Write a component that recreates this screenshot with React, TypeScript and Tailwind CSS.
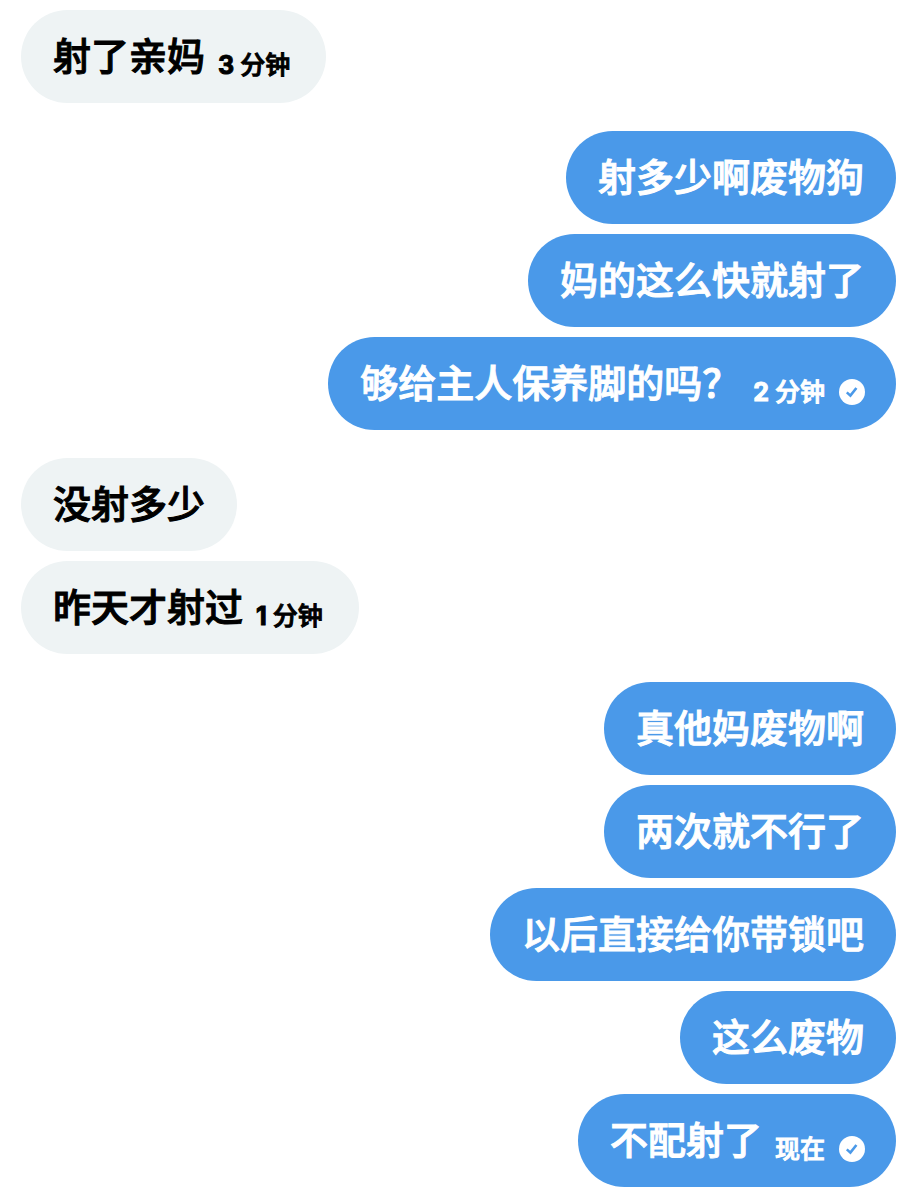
import React from 'react';
import clsx from 'clsx';

type Message = {
  text: string;
  count?: string;
  time?: string;
};

type MessageGroup = {
  from: 'me' | 'them';
  messages: Message[];
};

const conversation: MessageGroup[] = [
  {
    from: 'them',
    messages: [{ text: '射了亲妈', count: '3', time: '分钟' }],
  },
  {
    from: 'me',
    messages: [
      { text: '射多少啊废物狗' },
      { text: '妈的这么快就射了' },
      { text: '够给主人保养脚的吗？', count: '2', time: '分钟' },
    ],
  },
  {
    from: 'them',
    messages: [{ text: '没射多少' }, { text: '昨天才射过', count: '1', time: '分钟' }],
  },
  {
    from: 'me',
    messages: [
      { text: '真他妈废物啊' },
      { text: '两次就不行了' },
      { text: '以后直接给你带锁吧' },
      { text: '这么废物' },
      { text: '不配射了', time: '现在' },
    ],
  },
];

function SentIcon() {
  return (
    <svg viewBox="0 0 26 26" className="ml-[14px] size-[26px] shrink-0" role="img" aria-label="已发送">
      <circle cx="13" cy="13" r="13" fill="white" />
      <path d="M7.8 13.4l3.6 3.2 6-7.6" fill="none" stroke="#4a99e9" strokeWidth="2.6" />
    </svg>
  );
}

function Bubble({ message, mine }: { message: Message; mine: boolean }) {
  return (
    <li
      className={clsx(
        'flex min-h-[93px] items-center rounded-[47px] pl-8 [-webkit-text-stroke:1px]',
        mine ? 'bg-[#4a99e9] text-white' : 'bg-[#eef3f4] text-black',
        !message.time && 'pr-8',
        message.time && (mine ? 'pr-[31px]' : 'pr-9')
      )}
    >
      <p className="pb-[2px] text-[38px] leading-[56px] font-medium">{message.text}</p>
      {message.time && (
        <div className="ml-[13px] flex items-center self-end pb-6">
          <span className="flex items-baseline gap-[6px] text-[25px] leading-7 font-medium whitespace-nowrap">
            {message.count && <span className="font-bold">{message.count}</span>}
            {message.time}
          </span>
          {mine && <SentIcon />}
        </div>
      )}
    </li>
  );
}

function App() {
  return (
    <main className="flex min-h-screen flex-col gap-7 bg-white px-[21px] pt-[10px] pb-3 font-[Inter,'Noto_Sans_CJK_SC',sans-serif]">
      {conversation.map((group, index) => (
        <ul
          key={index}
          className={clsx('flex flex-col gap-[10px]', group.from === 'me' ? 'items-end' : 'items-start')}
        >
          {group.messages.map((message) => (
            <Bubble key={message.text} message={message} mine={group.from === 'me'} />
          ))}
        </ul>
      ))}
    </main>
  );
}

export default App;
